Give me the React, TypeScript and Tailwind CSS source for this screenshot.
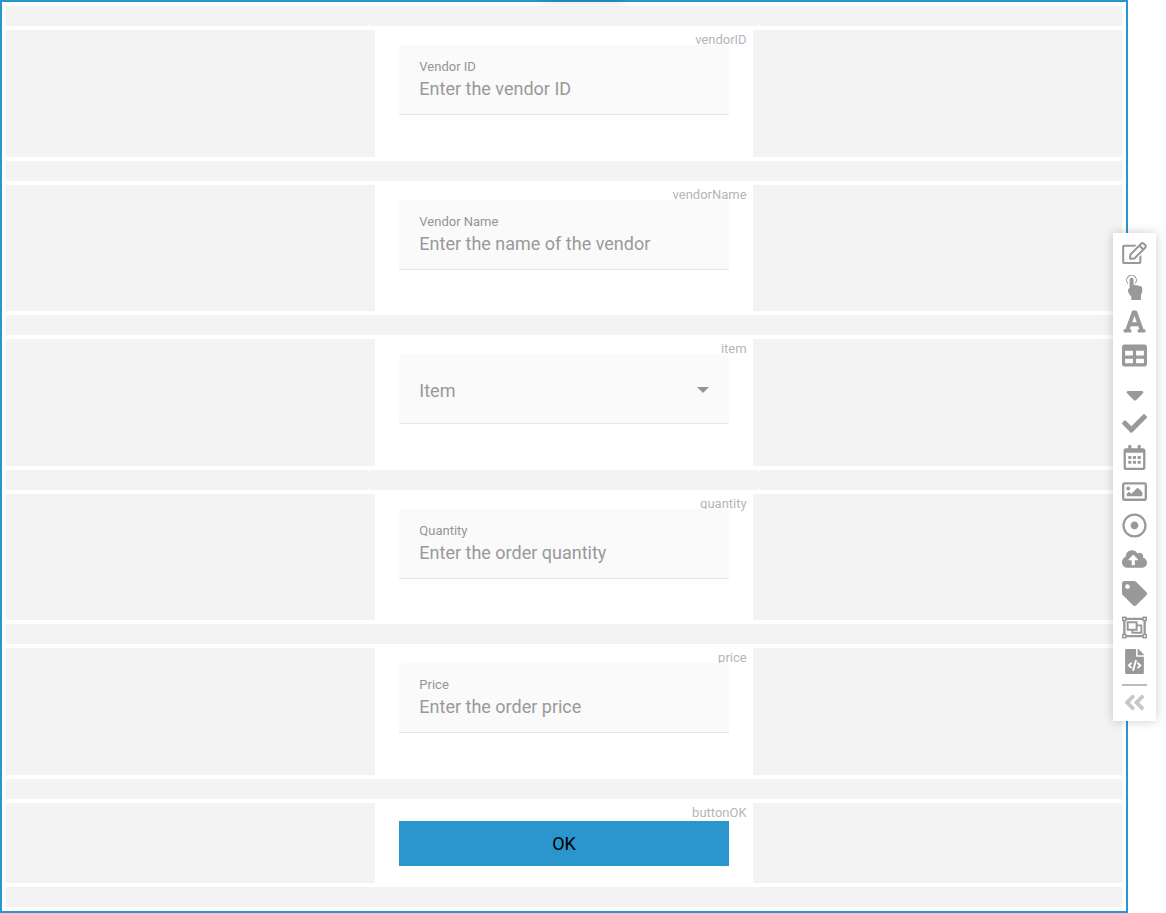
import { Fragment, type ReactNode } from "react";
import {
  FaAngleDoubleLeft,
  FaCheck,
  FaCloudUploadAlt,
  FaFileCode,
  FaFont,
  FaRegCalendarAlt,
  FaRegDotCircle,
  FaRegEdit,
  FaRegImage,
  FaRegObjectGroup,
  FaSortDown,
  FaTable,
  FaTag,
} from "react-icons/fa";

type Field = {
  name: string;
  label: string;
  placeholder?: string;
  kind: "text" | "select";
};

const FIELDS: Field[] = [
  {
    name: "vendorID",
    label: "Vendor ID",
    placeholder: "Enter the vendor ID",
    kind: "text",
  },
  {
    name: "vendorName",
    label: "Vendor Name",
    placeholder: "Enter the name of the vendor",
    kind: "text",
  },
  { name: "item", label: "Item", kind: "select" },
  {
    name: "quantity",
    label: "Quantity",
    placeholder: "Enter the order quantity",
    kind: "text",
  },
  {
    name: "price",
    label: "Price",
    placeholder: "Enter the order price",
    kind: "text",
  },
];

function TouchIcon() {
  return (
    <svg viewBox="0 0 25 25" width="25" height="25" fill="currentColor">
      <path
        d="M6 8.600A4.900 4.900 0 1 1 13.200 8.400"
        fill="none"
        stroke="currentColor"
        strokeWidth="1.1"
      />
      <path d="M7.6 4.800a2 2 0 0 1 4 0v5.200c.5-.5 2-.5 2.600.400.8-.5 2.200-.3 2.700.6 1.600-.4 3.300.4 3.400 2.200v3c0 1.700-1.300 3-1.400 4.700V25H9.300v-3.300c-1-1.700-2.800-3-3.200-5.200-.3-1.700.2-3 1.500-3.600z" />
    </svg>
  );
}

const TOOLS: { title: string; icon: ReactNode }[] = [
  { title: "Input", icon: <FaRegEdit className="h-[22px] w-[25px]" /> },
  { title: "Button", icon: <TouchIcon /> },
  { title: "Text", icon: <FaFont size={25} /> },
  { title: "Table", icon: <FaTable size={25} /> },
  { title: "Dropdown", icon: <FaSortDown size={30} /> },
  { title: "Checkbox", icon: <FaCheck size={25} /> },
  { title: "Date", icon: <FaRegCalendarAlt size={25} /> },
  { title: "Image", icon: <FaRegImage size={25} /> },
  { title: "Radio", icon: <FaRegDotCircle size={25} /> },
  { title: "Upload", icon: <FaCloudUploadAlt className="h-5 w-[25px]" /> },
  { title: "Label", icon: <FaTag size={25} /> },
  { title: "Group", icon: <FaRegObjectGroup size={25} /> },
  { title: "Code", icon: <FaFileCode size={25} /> },
];

function Spacer() {
  return <div className="h-5 bg-[#f3f3f3]" />;
}

function Row({ name, children }: { name: string; children: ReactNode }) {
  return (
    <div className="grid grid-cols-3 gap-1">
      <div className="bg-[#f3f3f3]" />
      <div className="relative px-5">
        <span className="absolute top-[2px] right-[2px] text-[13px] leading-4 text-[#b5b5bb]">
          {name}
        </span>
        {children}
      </div>
      <div className="bg-[#f3f3f3]" />
    </div>
  );
}

function TextField({ field }: { field: Field }) {
  return (
    <div className="relative mt-[15px] flex h-[70px] flex-col rounded-t border-b border-[#e6e6e6] bg-[#fafafa] px-5 pt-3">
      <label
        htmlFor={field.name}
        className="text-[13px] leading-5 text-[#959595]"
      >
        {field.label}
      </label>
      <input
        id={field.name}
        type="text"
        placeholder={field.placeholder}
        className="h-6 w-full bg-transparent text-[18px] leading-6 outline-none placeholder:text-[#999999]"
      />
    </div>
  );
}

function SelectField({ field }: { field: Field }) {
  return (
    <div className="relative mt-[15px] h-[70px] rounded-t border-b border-[#e6e6e6] bg-[#fafafa]">
      <select
        id={field.name}
        aria-label={field.label}
        className="h-full w-full appearance-none bg-transparent px-5 pt-[3px] text-[18px] text-[#999999] outline-none"
      >
        <option>{field.label}</option>
      </select>
      <svg
        viewBox="0 0 12 6"
        className="pointer-events-none absolute top-[33px] right-5 h-[6px] w-3"
        fill="#959595"
      >
        <path d="M0 0h12L6 6z" />
      </svg>
    </div>
  );
}

function Toolbar() {
  return (
    <div className="absolute top-[233px] right-[10px] flex w-[43px] flex-col items-center bg-white pt-[3px] text-[#999999] shadow-[0_0_10px_rgba(0,0,0,0.2)]">
      {TOOLS.map((tool) => (
        <button
          key={tool.title}
          type="button"
          aria-label={tool.title}
          className="flex h-[34px] w-full items-center justify-center"
        >
          {tool.icon}
        </button>
      ))}
      <hr className="mt-[6px] w-[25px] border-t-2 border-[#bbbbbb]" />
      <button
        type="button"
        aria-label="Collapse"
        className="flex h-[35px] w-full items-center justify-center pb-[3px] text-[#c6c8cc]"
      >
        <FaAngleDoubleLeft size={25} />
      </button>
    </div>
  );
}

export default function App() {
  return (
    <div className="relative min-h-screen overflow-hidden bg-white font-['Roboto',sans-serif]">
      <form className="mr-[38px] grid min-h-screen grid-rows-[20px_1fr_20px_1fr_20px_1fr_20px_1fr_20px_1fr_20px_80px_20px] gap-1 border-2 border-[#2a96cd] p-1">
        {FIELDS.map((field) => (
          <Fragment key={field.name}>
            <Spacer />
            <Row name={field.name}>
              {field.kind === "select" ? (
                <SelectField field={field} />
              ) : (
                <TextField field={field} />
              )}
            </Row>
          </Fragment>
        ))}
        <Spacer />
        <Row name="buttonOK">
          <button
            type="button"
            className="mt-[18px] h-[45px] w-full bg-[#2a96cd] text-[18px] text-black"
          >
            OK
          </button>
        </Row>
        <Spacer />
      </form>

      {/* shadow of the panel handle tucked above the canvas */}
      <div className="absolute bottom-full left-1/2 h-5 w-[84px] -translate-x-1/2 shadow-[0_0_8px_rgba(0,0,0,0.2)]" />

      <Toolbar />
    </div>
  );
}
